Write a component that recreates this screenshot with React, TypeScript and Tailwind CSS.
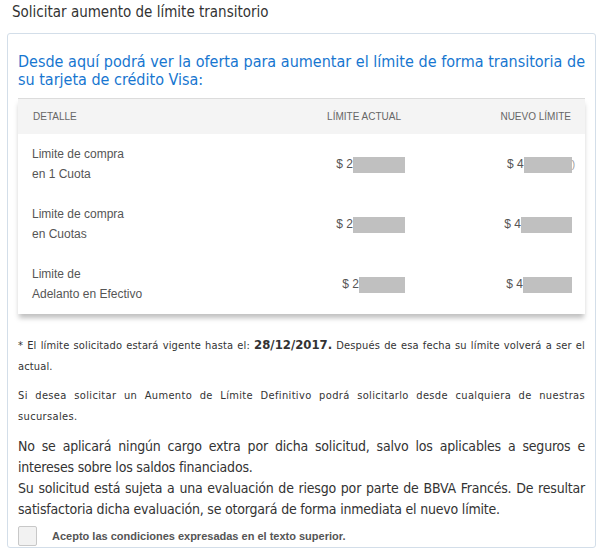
import React from "react";

const tahoma = { fontFamily: '"DejaVu Sans Condensed", "DejaVu Sans", sans-serif' };
const arial = { fontFamily: '"Liberation Sans", Arial, sans-serif' };

type Row = { lines: string[]; actual: string; nuevo: string; shift?: boolean; paren?: boolean };

const rows: Row[] = [
    { lines: ["Limite de compra", "en 1 Cuota"], actual: "$ 2", nuevo: "$ 4", paren: true },
    { lines: ["Limite de compra", "en Cuotas"], actual: "$ 2", nuevo: "$ 4" },
    { lines: ["Limite de", "Adelanto en Efectivo"], actual: "$ 2", nuevo: "$ 4", shift: true },
];

function Hidden({ w }: { w: string }) {
    return <span className={`inline-block h-[16px] bg-[#c0c0c0] align-middle ${w}`} />;
}

export default function App() {
    return (
        <div className="w-[601px] h-[560px] bg-white overflow-hidden">
            <div className="pl-[12px] pt-[3px] h-[33px] text-[15px] leading-[18px] text-[#333]" style={tahoma}>
                Solicitar aumento de límite transitorio
            </div>

            <div className="ml-[7px] mr-[5px] h-[515px] border border-[#d3dee9] rounded-[3px] px-[10px]">
                <h2 className="pt-[19px] text-[16px] leading-[18px] text-[#1776d0] text-justify" style={tahoma}>
                    Desde aquí podrá ver la oferta para aumentar el límite de forma transitoria de su tarjeta de crédito Visa:
                </h2>

                {/* tabla */}
                <div className="mt-[9px] border-t border-[#dcdcdc] shadow-[0_5px_5px_-1px_rgba(0,0,0,0.25)]" style={arial}>
                    <div className="grid grid-cols-[1fr_117px_170px] h-[35px] items-center bg-[#f4f4f4] text-[10px] text-[#666]">
                        <div className="pl-[15px]">DETALLE</div>
                        <div className="text-right pr-[14px]">LÍMITE ACTUAL</div>
                        <div className="text-right pr-[14px]">NUEVO LÍMITE</div>
                    </div>
                    {rows.map((r, i) => (
                        <div key={i} className="grid grid-cols-[1fr_117px_170px] h-[60px] items-center bg-white text-[12px] text-[#555]">
                            <div className="pl-[14px] leading-[20px]">
                                {r.lines.map((l) => (
                                    <div key={l}>{l}</div>
                                ))}
                            </div>
                            <div className="text-right pr-[10px]">
                                {r.actual}
                                <Hidden w={r.shift ? "w-[46px]" : "w-[52px]"} />
                            </div>
                            <div className="text-right pr-[10px]">
                                {r.nuevo}
                                <Hidden w={r.shift ? "w-[49px]" : r.paren ? "w-[48px]" : "w-[51px]"} />
                                {r.paren ? <span className="text-[#999] text-[10px]">)</span> : <span className="inline-block w-[3px]" />}
                            </div>
                        </div>
                    ))}
                </div>

                <div className="mt-[21px] text-[11px] leading-[21px] tracking-[0.15px] text-[#333] text-justify" style={tahoma}>
                    * El límite solicitado estará vigente hasta el: <b className="text-[13px] leading-none tracking-normal">28/12/2017.</b> Después de esa fecha su límite volverá a ser el actual.
                </div>
                <div className="mt-[8px] text-[11px] leading-[21px] tracking-[0.35px] text-[#333] text-justify" style={tahoma}>
                    Si desea solicitar un Aumento de Límite Definitivo podrá solicitarlo desde cualquiera de nuestras sucursales.
                </div>

                <div className="mt-[9px] text-[14px] leading-[21px] tracking-[-0.2px] text-[#333] text-justify" style={tahoma}>
                    No se aplicará ningún cargo extra por dicha solicitud, salvo los aplicables a seguros e intereses sobre los saldos financiados.
                    <br />
                    Su solicitud está sujeta a una evaluación de riesgo por parte de BBVA Francés. De resultar satisfactoria dicha evaluación, se otorgará de forma inmediata el nuevo límite.
                </div>

                <label className="mt-[6px] flex items-center gap-[15px]">
                    <span className="w-[19px] h-[20px] bg-[#f2f2f2] border border-[#c8c8c8] rounded-[2px]" />
                    <span className="text-[11px] font-semibold text-[#555]" style={arial}>
                        Acepto las condiciones expresadas en el texto superior.
                    </span>
                </label>
            </div>
        </div>
    );
}
